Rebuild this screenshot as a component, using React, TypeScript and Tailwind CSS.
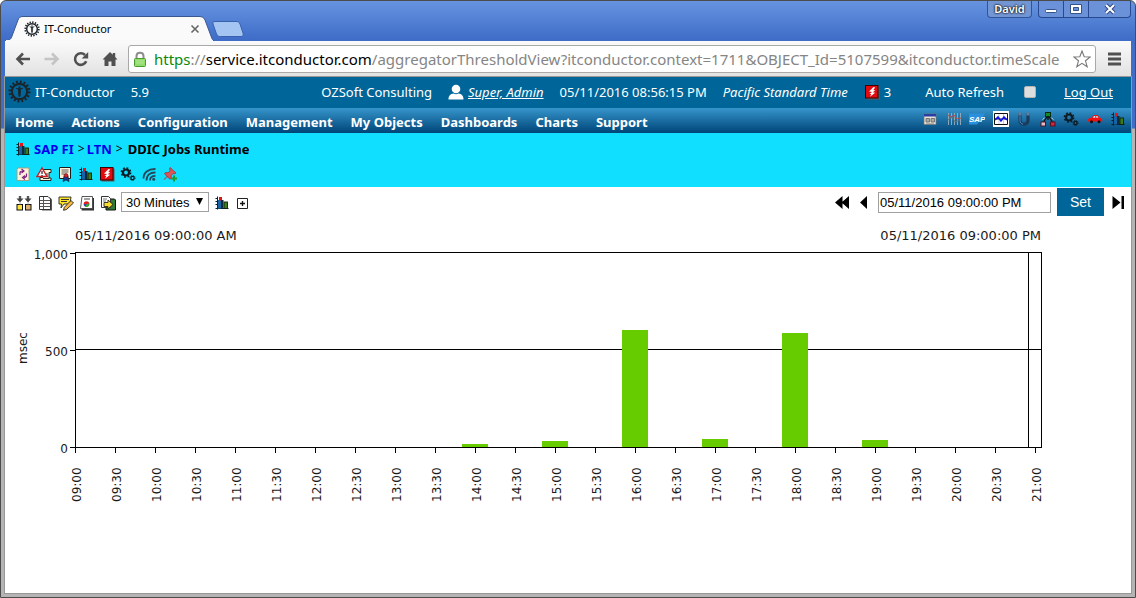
import type { ReactNode } from "react";

function Icon({ children }: { children: ReactNode }) {
  return (
    <svg viewBox="0 0 16 16" className="block h-4 w-4 shrink-0" aria-hidden>
      {children}
    </svg>
  );
}

function GearLogo({ size, fill = "none" }: { size: string; fill?: string }) {
  return (
    <svg viewBox="0 0 24 24" className={`block shrink-0 ${size}`} aria-hidden>
      <circle cx="12" cy="12" r="10.2" fill="none" stroke="#1c2329" strokeWidth="2.6" strokeDasharray="2 2.005" />
      <circle cx="12" cy="12" r="8" fill={fill} stroke="#1c2329" strokeWidth="2.2" />
      <path d="M8.4 8.6L11 9.6h2l2.600-1M11.1 9.8h1.800v4.200l-.4 3.200h-1l-.4-3.200z" fill="#1c2329" stroke="#1c2329" strokeWidth=".9" />
      <circle cx="12" cy="7.6" r="1.1" fill="#1c2329" />
    </svg>
  );
}

const BarsIcon = () => (
  <Icon>
    <path d="M3.5 1.5v13M1.5 3.5h2M1.5 6.5h2M1.5 9.5h2M1.5 13.5h13" stroke="#06232e" fill="none" />
    <rect x="4" y="5" width="3" height="8.5" fill="#1763a8" />
    <rect x="5" y="2" width="3" height="3.5" fill="#e01515" />
    <rect x="7" y="5" width="2.500" height="8.500" fill="#0d2c3b" />
    <rect x="10" y="7" width="3.500" height="6.500" fill="#3b7c1d" stroke="#10220a" strokeWidth=".9" />
  </Icon>
);

const AlertIcon = () => (
  <Icon>
    <rect x="2.500" y="2.500" width="13" height="13" fill="#5c5c5c" />
    <rect x="1.500" y="1.500" width="12.500" height="12.500" fill="#e20a0f" stroke="#3c0000" />
    <path d="M9.500 3L5 7.500l3 .4-2.500 2 1.800.2-1.300 2.600 5.200-4-2.500-.5 2.600-2-2-.3 1.900-2.400z" fill="#fff" />
  </Icon>
);

const GearsIcon = () => (
  <Icon>
    <circle cx="6" cy="6.500" r="3" fill="none" stroke="#0d1c23" strokeWidth="2.200" />
    <circle cx="6" cy="6.500" r="4.600" fill="none" stroke="#0d1c23" strokeWidth="1.600" strokeDasharray="1.810 1.803" />
    <circle cx="12.500" cy="12" r="1.600" fill="none" stroke="#0d1c23" strokeWidth="1.400" />
    <circle cx="12.500" cy="12" r="2.600" fill="none" stroke="#0d1c23" strokeWidth="1" strokeDasharray="1.020 1.022" />
  </Icon>
);

const WindowIcon = () => (
  <Icon>
    <rect x="2" y="3" width="12" height="10.500" fill="#e5e2da" stroke="#77736d" strokeWidth=".7" />
    <rect x="2" y="3" width="12" height="2.500" fill="#2b3ea5" />
    <path d="M4 7.500h3.500v3.500H4zM9 7.500h3.500v3.500H9z" fill="#aaa" stroke="#66625c" strokeWidth=".8" />
    <path d="M4 12.500h8" stroke="#999" strokeWidth=".7" />
  </Icon>
);

const LinesIcon = () => (
  <Icon>
    <path d="M2.500 2v12M5.500 2v12M8.500 2v12M11.500 2v12M14.500 2v12" stroke="#9aaeb8" strokeWidth=".9" fill="none" />
    <path d="M2 4l3 2 3-2 3 4 4-1" stroke="#b34e4e" fill="none" />
    <path d="M2 9l4-3 3 5 5-2" stroke="#5f7278" fill="none" />
  </Icon>
);

const SapIcon = () => (
  <Icon>
    <path d="M0 2.500h16L8 13.500H0z" fill="#2a8fdc" />
    <text x="0" y="11" fontSize="8" fontWeight="700" fontStyle="italic" fontFamily="Liberation Sans, sans-serif" fill="#fff">SAP</text>
  </Icon>
);

const LineChartIcon = () => (
  <Icon>
    <rect x="0" y="0" width="16" height="16" fill="#fff" />
    <path d="M1.500 2.500h13v11h-13zM1.500 8h13" fill="none" stroke="#111" />
    <path d="M6 3v10M10.500 3v10" stroke="#b9b9b9" strokeWidth=".7" />
    <path d="M2 9l3-3 3 4 3-4 3 3" stroke="#1414e8" strokeWidth="1.500" fill="none" />
  </Icon>
);

const MagnetIcon = () => (
  <Icon>
    <path d="M4 2v7.500c0 5 8 5 8 0V2" fill="none" stroke="#1b3c5e" strokeWidth="3.200" />
    <path d="M4 1.500v3M12 1.500v3" stroke="#62809a" strokeWidth="3" />
    <path d="M4 5v4.500c0 2 1 3.200 3 3.600" stroke="#4d8cc4" fill="none" />
  </Icon>
);

const NodesIcon = () => (
  <Icon>
    <path d="M8 4L3 12M8 4l5 8M8 4v5" stroke="#111" fill="none" strokeWidth="1.400" />
    <rect x="5.500" y="1.500" width="5" height="4" fill="#168b2c" stroke="#08290e" />
    <rect x="1" y="11" width="4.500" height="4" fill="#e9bcc8" stroke="#501421" />
    <rect x="10.500" y="11" width="4.500" height="4" fill="#d32342" stroke="#501421" />
    <path d="M2.500 8.500l2-1.500M13.500 8.500l-2-1.500" stroke="#c3d7dd" />
  </Icon>
);

const CarIcon = () => (
  <Icon>
    <path d="M1 8.500c0-1 2-1.500 3.500-1.700L6.500 4h4.200l2 2.800c1.500.2 2.500.8 2.500 2.200v1.500H1z" fill="#ee1111" />
    <path d="M5.800 6.800L7 5h1.300v1.800zM9.200 5h1.100l1.200 1.800H9.200z" fill="#cfe8f2" />
    <circle cx="4.500" cy="10.800" r="1.500" fill="#111" />
    <circle cx="12" cy="10.800" r="1.500" fill="#111" />
  </Icon>
);

const RefreshPageIcon = () => (
  <Icon>
    <path d="M3 2h11v12.500H2V3z" fill="#fbf2d8" stroke="#a39a7a" strokeWidth=".9" />
    <path d="M5 9V7c0-1.200 1-2 3-2M6.500 3l2.500 2-2.500 2M11.500 7.500V9.500c0 1.200-1 2-3 2M10 9.500L7.500 11.500l2.500 2" fill="none" stroke="#7c2184" strokeWidth="1.200" />
  </Icon>
);

const ScrollAlertIcon = () => (
  <Icon>
    <path d="M7 3.500h8v3h-2v5.500h2v2.500H4v-3h3z" fill="#fff3d9" stroke="#222" />
    <path d="M9 8h3M9 10h3M7 12.500h6" stroke="#333" />
    <path d="M6 2L1 10.500h10z" fill="#fff" stroke="#cc1f25" strokeWidth="1.400" />
    <path d="M6 5v3M6 9v1" stroke="#222" strokeWidth="1.200" />
  </Icon>
);

const CertificateIcon = () => (
  <Icon>
    <path d="M2.500 1.500h11v11h-11z" fill="#fff6dc" stroke="#1b1b1b" />
    <path d="M4.500 4h7M4.500 6h7M4.500 8h3" stroke="#555" />
    <path d="M7 10l-1 5.500 3-1.500 3 1.500-1-5.500z" fill="#173b9a" stroke="#111" strokeWidth=".6" />
    <circle cx="9" cy="9.500" r="2" fill="#d6262c" stroke="#3e0d0f" strokeWidth=".6" />
  </Icon>
);

const SignalIcon = () => (
  <Icon>
    <path d="M2.500 12.500C2.500 6.500 7 2.800 14.500 3M5.500 14.500C5.500 9 9 6.300 14.500 6.500M9 14.500c0-3 2-4.600 5.500-4.600" stroke="#26495a" strokeWidth="1.800" fill="none" />
    <circle cx="12.700" cy="13.200" r="1.500" fill="#26495a" />
  </Icon>
);

const PinIcon = () => (
  <Icon>
    <path d="M7 9l-5 4.500" stroke="#6d7b80" strokeWidth="1.300" />
    <path d="M8 1.500l6 5.500-1.500.8-1.500-.3-2 2.300.2 2.400-1.200 1L2.500 7.800l1-1.200 2.500.2 2.200-2-.6-1.800z" fill="#de5358" stroke="#a92b31" strokeWidth=".8" />
    <path d="M12 9.500v6M9 12.500h6" stroke="#1e9b32" strokeWidth="2" />
  </Icon>
);

const MergeIcon = () => (
  <Icon>
    <path d="M4 1v3M12 1v3" stroke="#555" strokeWidth="2.400" />
    <path d="M.5 3.500h7L4 7.500zM8.500 3.500h7L12 7.500z" fill="#444" />
    <rect x="1" y="9.500" width="5.500" height="5.500" fill="#ffe53b" stroke="#111" />
    <rect x="9.500" y="9.500" width="5.500" height="5.500" fill="#d7b274" stroke="#111" />
    <path d="M4 7.500v2M12 7.500v2" stroke="#aaa" />
  </Icon>
);

const SheetIcon = () => (
  <Icon>
    <path d="M5 2.500h8l2 2V15.500H5z" fill="#555" />
    <path d="M2.500 1.500h8.500l2.500 2.500v10.500h-11z" fill="#fff" stroke="#333" />
    <path d="M3 5.500h10M3 8.500h10M3 11.500h10M6.500 2v12" stroke="#555" />
  </Icon>
);

const NotePencilIcon = () => (
  <Icon>
    <path d="M1 2h12l-1 7H6l-3 4 .5-4H1z" fill="#ffe329" stroke="#222" strokeWidth=".9" />
    <path d="M3 4.500h8M3 6.500h6" stroke="#333" />
    <path d="M13 5.500l2.500 2.500-7 6.500-3 .8.8-3z" fill="#f4b942" stroke="#222" strokeWidth=".9" />
  </Icon>
);

const ReportIcon = () => (
  <Icon>
    <path d="M4 3h11v12.500H2.500z" fill="#333" />
    <path d="M3 1.500h10.500v12h-12z" fill="#fff" stroke="#444" strokeWidth=".9" />
    <path d="M5 4h6" stroke="#444" />
    <circle cx="7.500" cy="9" r="2.800" fill="#e22222" />
    <path d="M7.500 9l2.800-.5a2.800 2.800 0 0 1-3.800 3.200z" fill="#2fae35" />
    <path d="M7.500 9l-1 2.700a2.800 2.800 0 0 1-1.800-2.500z" fill="#214ad1" />
  </Icon>
);

const ExportIcon = () => (
  <Icon>
    <path d="M6 4h8.500l1 1V15H6z" fill="#2d7b34" stroke="#111" />
    <path d="M1.500 1.500h7l2 2v9h-9z" fill="#fff" stroke="#333" />
    <path d="M3 4h4M3 6h3" stroke="#777" />
    <path d="M4 7.500h4V5l5 4.500L8 14v-2.500H4z" fill="#f7dc2b" stroke="#222" strokeWidth=".9" />
  </Icon>
);

const PlusBoxIcon = () => (
  <Icon>
    <path d="M2.500 3.500h10v10h-10z" fill="#fff" stroke="#222" />
    <path d="M7.500 6v5M5 8.500h5" stroke="#111" strokeWidth="1.300" />
  </Icon>
);

const navIcons = [
  { label: "Window", Glyph: WindowIcon },
  { label: "Trends", Glyph: LinesIcon },
  { label: "Systems", Glyph: SapIcon },
  { label: "Line chart", Glyph: LineChartIcon },
  { label: "Magnet", Glyph: MagnetIcon },
  { label: "Topology", Glyph: NodesIcon },
  { label: "Settings", Glyph: GearsIcon },
  { label: "Car", Glyph: CarIcon },
  { label: "Bar chart", Glyph: BarsIcon },
];

const objectIcons = [
  { label: "Refresh", Glyph: RefreshPageIcon },
  { label: "Alert log", Glyph: ScrollAlertIcon },
  { label: "Certificate", Glyph: CertificateIcon },
  { label: "Bar chart", Glyph: BarsIcon },
  { label: "Alerts", Glyph: AlertIcon },
  { label: "Settings", Glyph: GearsIcon },
  { label: "Feed", Glyph: SignalIcon },
  { label: "Pin", Glyph: PinIcon },
];

const chartTools = [
  { label: "Merge", Glyph: MergeIcon },
  { label: "Table", Glyph: SheetIcon },
  { label: "Edit note", Glyph: NotePencilIcon },
  { label: "Report", Glyph: ReportIcon },
  { label: "Export", Glyph: ExportIcon },
];

const menu = ["Home", "Actions", "Configuration", "Management", "My Objects", "Dashboards", "Charts", "Support"];

function IconButtons({ items }: { items: { label: string; Glyph: () => ReactNode }[] }) {
  return (
    <>
      {items.map(({ label, Glyph }) => (
        <button key={label} type="button" aria-label={label} className="block">
          <Glyph />
        </button>
      ))}
    </>
  );
}

function TitleBar() {
  return (
    <div className="flex h-10 items-start justify-between">
      <div className="flex h-full items-end">
        <div className="relative flex h-[25px] w-[209px] items-center pl-[19px] pr-[14px]">
          <svg viewBox="0 0 209 25" className="absolute inset-0 h-full w-full" aria-hidden>
            <path d="M0 25C5 24.500 6 23 7 20L13 4C14 1.500 15 .5 18 .5H194C197 .5 199 1.500 200 4L206 20C207 23 208 24.500 209 25z" fill="#fafafa" stroke="#3b5790" strokeWidth="1" />
            <path d="M1 25h207" stroke="#f8f8f8" strokeWidth="2" />
          </svg>
          <div className="relative flex w-full items-center">
            <GearLogo size="h-4 w-4" fill="#fff" />
            <span className="ml-1 text-[11px] leading-4 text-black">IT-Conductor</span>
            <button type="button" aria-label="Close tab" className="ml-auto">
              <svg viewBox="0 0 10 10" className="block h-[10px] w-[10px]">
                <path d="M1.500 1.500l7 7M8.500 1.500l-7 7" stroke="#666" strokeWidth="1.600" />
              </svg>
            </button>
          </div>
        </div>
        <button type="button" aria-label="New tab" className="-ml-[2px] mb-1">
          <svg viewBox="0 0 32 16" className="block h-4 w-8">
            <path d="M3 .5H24C26 .5 27 1 28 3L31 12C31.500 14 31 15.500 29 15.500H8.500C6.500 15.500 5.500 15 4.500 13L1 3C.5 1.500 1 .5 3 .5z" fill="#a4c5f2" stroke="#3862ad" />
          </svg>
        </button>
      </div>
      <div className="flex h-[17px] gap-[6px]">
        <button type="button" className="w-[45px] rounded-b border border-t-0 border-[#31539b] bg-[#7295d3] text-[11px] font-semibold leading-4 text-white [text-shadow:0_0_2px_#000,0_0_2px_#000]">David</button>
        <div className="flex rounded-b border border-t-0 border-[#27498f] bg-[#6b92d9]">
          <button type="button" aria-label="Minimize" className="flex w-[25px] items-center justify-center border-r border-[#27498f]">
            <svg viewBox="0 0 12 12" className="h-3 w-3"><rect x=".5" y="6.500" width="11" height="3" rx="1" fill="#fff" stroke="#35538b" /></svg>
          </button>
          <button type="button" aria-label="Maximize" className="flex w-[25px] items-center justify-center border-r border-[#27498f]">
            <svg viewBox="0 0 12 12" className="h-3 w-3"><path d="M.5 1.500h11v9H.5zM3.500 4.500v3h5v-3z" fill="#fff" fillRule="evenodd" stroke="#35538b" /></svg>
          </button>
          <button type="button" aria-label="Close" className="flex w-[41px] items-center justify-center">
            <svg viewBox="0 0 12 12" className="h-3 w-3"><path d="M2 2l8 8M10 2l-8 8" stroke="#2e4a80" strokeWidth="4" /><path d="M2 2l8 8M10 2l-8 8" stroke="#fff" strokeWidth="2" /></svg>
          </button>
        </div>
      </div>
    </div>
  );
}

function BrowserToolbar() {
  return (
    <div className="flex h-9 items-center border-b border-[#b6b6b6] bg-linear-to-b from-[#fafafa] to-[#e2e2e2] px-[10px]">
      <div className="flex gap-[13px]">
        <button type="button" aria-label="Back">
          <Icon><path d="M15 8H3M8 2.500L2.500 8 8 13.500" fill="none" stroke="#505050" strokeWidth="2.600" /></Icon>
        </button>
        <button type="button" aria-label="Forward">
          <Icon><path d="M.5 8H13M8 2.500L13.500 8 8 13.500" fill="none" stroke="#c4c4c4" strokeWidth="2.600" /></Icon>
        </button>
        <button type="button" aria-label="Reload">
          <Icon>
            <path d="M13.200 10.200A5.800 5.800 0 1 1 12 4" fill="none" stroke="#505050" strokeWidth="2.600" />
            <path d="M15.200 1v6.500H8.700z" fill="#505050" />
          </Icon>
        </button>
        <button type="button" aria-label="Home page">
          <Icon>
            <path d="M8 1L.5 8.500h2V15h4v-4.500h3V15h4V8.500h2L13.200 6V2h-2.400v1.800z" fill="#505050" />
          </Icon>
        </button>
      </div>
      <div className="ml-[10px] flex h-7 min-w-0 flex-1 items-center rounded-[3px] border border-[#a9a9a9] bg-white px-1">
        <svg viewBox="0 0 14 16" className="h-4 w-[14px] shrink-0" role="img" aria-label="Secure">
          <path d="M3.500 8V5c0-4.500 7-4.500 7 0v3" fill="none" stroke="#8d8d8d" strokeWidth="2" />
          <rect x="1.500" y="7.500" width="11" height="8" rx="1" fill="#93dc6e" stroke="#4b9a30" />
          <path d="M3 10h8M3 12h8" stroke="#b5eb99" strokeWidth=".8" />
        </svg>
        <div className="ml-[7px] min-w-0 flex-1 overflow-hidden whitespace-nowrap text-[15px] leading-6 text-[#858585]">
          <span className="text-[#0b8a0b]">https</span>://<span className="text-black">service.itconductor.com</span>/aggregatorThresholdView?itconductor.context=1711&amp;OBJECT_Id=5107599&amp;itconductor.timeScale
        </div>
        <button type="button" aria-label="Bookmark">
          <svg viewBox="0 0 18 18" className="block h-[18px] w-[18px]">
            <path d="M9 1l2.200 5.700 6 .3-4.700 3.800 1.700 6L9 13.400l-5.200 3.400 1.700-6L.8 7l6-.3z" fill="#fff" stroke="#777" strokeWidth="1.100" />
          </svg>
        </button>
      </div>
      <button type="button" aria-label="Browser menu" className="ml-3">
        <svg viewBox="0 0 13 14" className="block h-[14px] w-[13px]"><path d="M0 2h13M0 7h13M0 12h13" stroke="#505050" strokeWidth="3" /></svg>
      </button>
    </div>
  );
}

function AppHeader() {
  return (
    <header>
      <div className="flex h-[31px] items-center whitespace-nowrap bg-[#006699] pb-[2px] pl-[3px] pr-[18px] text-[13px] leading-5 text-white">
        <GearLogo size="h-[23px] w-[23px]" />
        <span className="ml-1">IT-Conductor</span>
        <span className="ml-4">5.9</span>
        <div className="ml-auto flex items-center">
          <span>OZSoft Consulting</span>
          <svg viewBox="0 0 16 16" className="ml-4 h-4 w-4" aria-hidden>
            <circle cx="8" cy="5" r="4.300" fill="#fff" />
            <path d="M.5 15.500c0-4 2-5.500 5-6 1.600 1 3.400 1 5 0 3 .5 5 2 5 6z" fill="#fff" />
          </svg>
          <a href="#account" className="ml-1 italic underline">Super, Admin</a>
          <span className="ml-4">05/11/2016 08:56:15 PM</span>
          <span className="ml-4 italic">Pacific Standard Time</span>
          <span className="ml-4"><AlertIcon /></span>
          <span className="ml-1">3</span>
          <label htmlFor="auto-refresh" className="ml-[34px]">Auto Refresh</label>
          <input id="auto-refresh" type="checkbox" className="ml-5 h-3 w-3 appearance-none rounded-[2px] border border-[#b5b5b5] bg-[#dedede]" />
          <a href="#logout" className="ml-7 underline">Log Out</a>
        </div>
      </div>
      <nav className="flex h-[25px] items-center justify-between bg-linear-to-b from-[#3596cc] to-[#004578] pl-[10px] pr-[5px] text-[13px] font-bold leading-5 text-white">
        <div className="flex gap-[18px] pt-[2px]">
          {menu.map((item) => (
            <a key={item} href="#menu" className="whitespace-nowrap">{item}</a>
          ))}
        </div>
        <div className="flex w-[204px] justify-between pb-1">
          <IconButtons items={navIcons} />
        </div>
      </nav>
    </header>
  );
}

function ObjectBar() {
  return (
    <section className="h-[54px] bg-[#11dfff] pl-[10px] pt-[6px]">
      <div className="flex items-center text-[13px] font-bold leading-5 text-black">
        <BarsIcon />
        <a href="#sap" className="ml-[3px] text-[#0000ee]">SAP FI</a>
        <span className="ml-1 text-[12px] font-normal">&gt;</span>
        <a href="#ltn" className="ml-[2px] text-[#0000ee]">LTN</a>
        <span className="ml-1 text-[12px] font-normal">&gt;</span>
        <h1 className="ml-[5px]">DDIC Jobs Runtime</h1>
      </div>
      <div className="mt-[7px] flex gap-[5px]">
        <IconButtons items={objectIcons} />
      </div>
    </section>
  );
}

function ChartToolbar() {
  return (
    <section className="flex h-[30px] items-center justify-between pl-[11px] pr-1 font-['Liberation_Sans',Arial,sans-serif] text-[13px]">
      <div className="flex items-center">
        <div className="flex gap-[5px] pt-[2px]">
          <IconButtons items={chartTools} />
        </div>
        <div className="relative ml-[5px]">
          <select aria-label="Interval" defaultValue="30" className="block h-5 w-[88px] appearance-none border border-[#a0a0a0] bg-white pl-1 text-black">
            <option value="30">30 Minutes</option>
            <option value="60">60 Minutes</option>
          </select>
          <svg viewBox="0 0 7 7" className="pointer-events-none absolute right-[6px] top-[6px] h-[7px] w-[7px]" aria-hidden><path d="M0 0h7L3.500 7z" fill="#000" /></svg>
        </div>
        <div className="ml-[5px] flex gap-[5px] pt-[2px]">
          <button type="button" aria-label="Chart type"><BarsIcon /></button>
          <button type="button" aria-label="Expand"><PlusBoxIcon /></button>
        </div>
      </div>
      <div className="flex items-center">
        <button type="button" aria-label="First"><Icon><path d="M8.500 2v13L1 8.500zM15 2v13L7.500 8.500z" fill="#000" /></Icon></button>
        <button type="button" aria-label="Previous" className="ml-[5px]"><Icon><path d="M12 2v13L5 8.500z" fill="#000" /></Icon></button>
        <input aria-label="End time" defaultValue="05/11/2016 09:00:00 PM" className="ml-[7px] h-[21px] w-[173px] border border-[#a0a0a0] bg-white px-px text-black" />
        <button type="button" className="ml-[6px] h-7 w-[47px] bg-[#006699] text-[14px] text-white">Set</button>
        <button type="button" aria-label="Last" className="ml-[7px]"><Icon><path d="M1.500 2v13l8-6.500zM10.500 2h2.500v13h-2.500z" fill="#000" /></Icon></button>
      </div>
    </section>
  );
}

const PLOT = { left: 70, right: 1036, top: 35, bottom: 230 };
const STEP = 40;
const hours = Array.from({ length: 25 }, (_, i) => {
  const h = 9 + Math.floor(i / 2);
  return `${String(h).padStart(2, "0")}:${i % 2 ? "30" : "00"}`;
});
const bars = [
  { slot: 10, height: 3 },
  { slot: 12, height: 6 },
  { slot: 14, height: 117 },
  { slot: 16, height: 8 },
  { slot: 18, height: 114 },
  { slot: 20, height: 7 },
];
const levels = [
  { text: "1,000", y: 36 },
  { text: "500", y: 133 },
  { text: "0", y: 230 },
];

function RuntimeChart() {
  const { left, right, top, bottom } = PLOT;
  return (
    <svg viewBox="0 0 1126 300" className="block h-auto w-full font-['DejaVu_Sans',sans-serif] text-[12px]" role="img" aria-label="DDIC Jobs Runtime in msec">
      <g fill="#1a1a1a">
        <text x={left} y="23" fontSize="13">05/11/2016 09:00:00 AM</text>
        <text x={right} y="23" fontSize="13" textAnchor="end">05/11/2016 09:00:00 PM</text>
        <text transform="translate(22 131) rotate(-90)" textAnchor="middle">msec</text>
        {levels.map((l) => <text key={l.text} x="63" y={l.y + 6} textAnchor="end">{l.text}</text>)}
        {hours.map((h, i) => (
          <text key={h} transform={`translate(${left + 6 + i * STEP} 285) rotate(-90)`}>{h}</text>
        ))}
      </g>
      <g shapeRendering="crispEdges" stroke="#000" fill="none">
        <path d={`M${left} ${top + 0.5}H${right + 0.5}V${bottom + 0.5}H${left + 0.5}V${top}`} />
        <path d={`M${left} 132.500H${right}M1023.500 ${top}V${bottom}`} />
        {levels.map((l) => <path key={l.text} d={`M${left - 5} ${l.y + 0.5}H${left}`} />)}
        {hours.map((h, i) => <path key={h} d={`M${left + 0.5 + i * STEP} ${bottom}v6`} />)}
      </g>
      {bars.map((b) => (
        <rect key={b.slot} x={left + b.slot * STEP - 13} y={bottom - b.height} width="26" height={b.height} fill="#66cc00" />
      ))}
    </svg>
  );
}

export default function App() {
  return (
    <div className="flex min-h-screen flex-col rounded-t-md border border-[#4c4c4c] bg-[linear-gradient(to_bottom,#6794e0_0px,#3f6dc8_38px,#3f6dc8_127px,#b4b4b4_128px)] px-1 pb-1 font-['Noto_Sans','Open_Sans',sans-serif]">
      <TitleBar />
      <BrowserToolbar />
      <main className="flex-1 bg-white shadow-[0_0_0_1px_#979797]">
        <AppHeader />
        <ObjectBar />
        <ChartToolbar />
        <RuntimeChart />
      </main>
    </div>
  );
}
